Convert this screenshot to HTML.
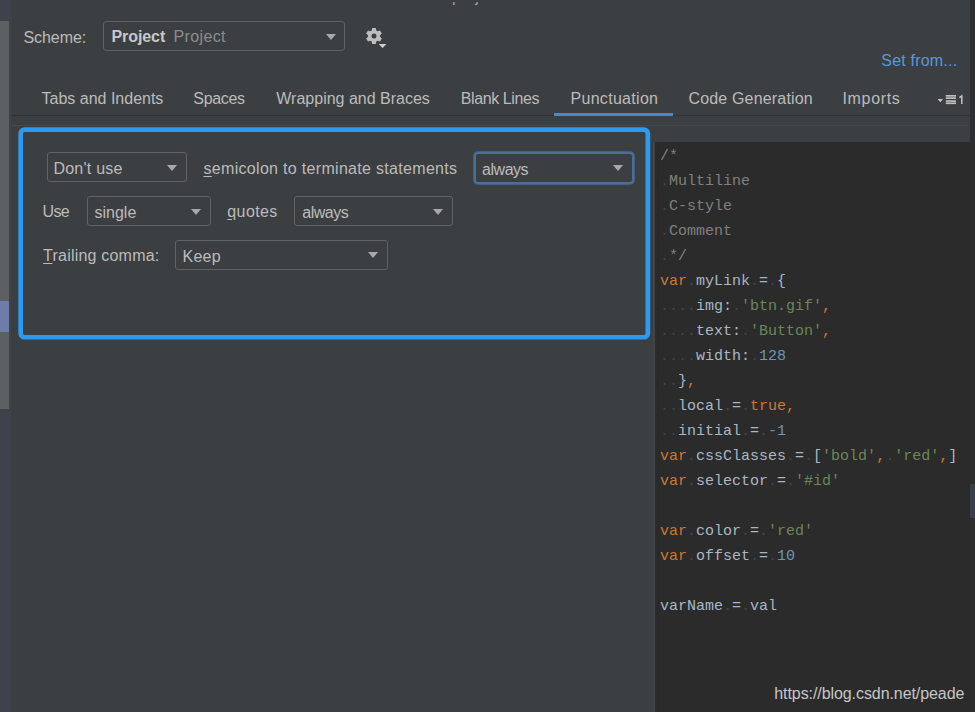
<!DOCTYPE html>
<html><head><meta charset="utf-8">
<style>
html,body{margin:0;padding:0;}
body{width:975px;height:712px;overflow:hidden;position:relative;background:#3C3F41;font-family:"Liberation Sans",sans-serif;}
.a{position:absolute;}
.t{position:absolute;font-size:16px;line-height:16px;white-space:pre;color:#BBBBBB;}
.cb{position:absolute;box-sizing:border-box;border:1px solid #616365;border-radius:3px;background:#3C3F41;}
.arr{position:absolute;width:0;height:0;border-left:5.5px solid transparent;border-right:5.5px solid transparent;border-top:6px solid #A8A8A8;}
.u{text-decoration:underline;text-underline-offset:2px;}
.code{position:absolute;left:660px;top:0;font-family:"Liberation Mono",monospace;font-size:15px;line-height:25px;white-space:pre;color:#A9B7C6;}
.k{color:#CC7832}.s{color:#6A8759}.n{color:#6897BB}.c{color:#808080}.w{color:#444444}
</style></head>
<body>
<!-- left tree strip -->
<div class="a" style="left:0;top:0;width:11px;height:712px;background:#3E424A;"></div>
<div class="a" style="left:0;top:21px;width:9px;height:388px;background:#5D6063;"></div>
<div class="a" style="left:0;top:301px;width:9px;height:31px;background:#6B7DA8;"></div>

<!-- top cut-off title -->
<div class="t" style="left:452px;top:-11px;color:#A0A0A0;clip-path:inset(13px 0 0 0);">project</div>

<!-- scheme row -->
<div class="t" style="left:23.5px;top:30px;letter-spacing:-0.08px;">Scheme:</div>
<div class="cb" style="left:103px;top:21px;width:242px;height:30px;"></div>
<div class="t" style="left:111.5px;top:29px;font-weight:bold;letter-spacing:-0.08px;color:#C8C8C8;">Project</div>
<div class="t" style="left:173.5px;top:29px;letter-spacing:0.37px;color:#8C8C8C;">Project</div>
<div class="arr" style="left:325.5px;top:33.5px;"></div>
<svg class="a" style="left:360.8px;top:22.9px;" width="28" height="28" viewBox="0 0 28 28"><path fill="#BDBDBD" fill-rule="evenodd" d="M15.25,7.44 L14.84,5.01 L11.16,5.01 L10.75,7.44 L9.31,8.27 L7.00,7.41 L5.16,10.60 L7.06,12.16 L7.06,13.84 L5.16,15.40 L7.00,18.59 L9.31,17.73 L10.75,18.56 L11.16,20.99 L14.84,20.99 L15.25,18.56 L16.69,17.73 L19.00,18.59 L20.84,15.40 L18.94,13.84 L18.94,12.16 L20.84,10.60 L19.00,7.41 L16.69,8.27 Z M13,10.5 A2.5,2.5 0 1 0 13,15.5 A2.5,2.5 0 1 0 13,10.5 Z"/><path d="M17.2,20.5 L25.9,20.5 L21.55,25.6 Z" fill="#3C3F41" stroke="#3C3F41" stroke-width="2" stroke-linejoin="round"/><path d="M17.7,20.9 L25.4,20.9 L21.55,25.0 Z" fill="#D0D0D0"/></svg>

<div class="t" style="left:881.3px;top:53px;letter-spacing:0.2px;color:#5A96DF;">Set from...</div>

<!-- tabs -->
<div class="t" style="left:41.5px;top:91px;">Tabs and Indents</div>
<div class="t" style="left:193.3px;top:91px;letter-spacing:-0.34px;">Spaces</div>
<div class="t" style="left:276.3px;top:91px;">Wrapping and Braces</div>
<div class="t" style="left:460.8px;top:91px;letter-spacing:-0.4px;">Blank Lines</div>
<div class="t" style="left:570.5px;top:91px;letter-spacing:0.3px;">Punctuation</div>
<div class="t" style="left:688.4px;top:91px;letter-spacing:0.18px;">Code Generation</div>
<div class="t" style="left:842.5px;top:91px;letter-spacing:0.67px;">Imports</div>
<svg class="a" style="left:930px;top:88px;" width="40" height="22" viewBox="0 0 40 22"><path d="M7.6,10.9 L13.1,10.9 L10.35,14.2 Z" fill="#C4C4C4"/><g fill="#BEBEBE"><rect x="15.8" y="7" width="10.2" height="1.7"/><rect x="15.8" y="9.3" width="10.2" height="1.7"/><rect x="15.8" y="12.2" width="10.2" height="1.7"/><rect x="15.8" y="14.4" width="10.2" height="1.7"/></g><path d="M29.4,9.6 L31.8,7.9 L31.8,16" stroke="#C4C4C4" stroke-width="1.5" fill="none"/></svg>
<div class="a" style="left:12px;top:115px;width:958px;height:1px;background:#303234;"></div>
<div class="a" style="left:554px;top:113px;width:119px;height:3px;background:#4A88C7;"></div>
<div class="a" style="left:12px;top:125px;width:956px;height:1px;background:#46494B;"></div>

<!-- right strip -->
<div class="a" style="left:970px;top:0;width:5px;height:142px;background:#2D2F30;"></div>

<!-- row 1 -->
<div class="cb" style="left:47px;top:152px;width:140px;height:30px;"></div>
<div class="t" style="left:53.4px;top:161px;letter-spacing:0.25px;">Don't use</div>
<div class="arr" style="left:167px;top:165px;"></div>
<div class="t" style="left:203.5px;top:161px;letter-spacing:0.31px;"><span class="u">s</span>emicolon to terminate statements</div>
<div class="cb" style="left:473.5px;top:151.5px;width:160.5px;height:32.5px;border:2.5px solid #4A6E95;box-shadow:0 0 0 1px #405F82;border-radius:4px;"></div>
<div class="t" style="left:482px;top:162px;letter-spacing:-0.46px;">always</div>
<div class="arr" style="left:613px;top:165px;"></div>

<!-- row 2 -->
<div class="t" style="left:42.6px;top:204px;letter-spacing:-0.65px;">Use</div>
<div class="cb" style="left:87px;top:196px;width:124px;height:30px;"></div>
<div class="t" style="left:94.5px;top:205px;">single</div>
<div class="arr" style="left:191px;top:209px;"></div>
<div class="t" style="left:227.3px;top:204px;letter-spacing:0.4px;"><span class="u">q</span>uotes</div>
<div class="cb" style="left:294px;top:196px;width:159px;height:30px;"></div>
<div class="t" style="left:302.2px;top:205px;letter-spacing:-0.46px;">always</div>
<div class="arr" style="left:433px;top:209px;"></div>

<!-- row 3 -->
<div class="t" style="left:43.1px;top:248px;letter-spacing:0.21px;"><span class="u">T</span>railing comma:</div>
<div class="cb" style="left:175px;top:240px;width:213px;height:30px;"></div>
<div class="t" style="left:182.4px;top:249px;letter-spacing:0.33px;">Keep</div>
<div class="arr" style="left:368px;top:252px;"></div>

<!-- annotation rectangle -->
<svg class="a" style="left:0;top:0;" width="975" height="712">
<rect x="20.65" y="129.55" width="627.2" height="207.7" rx="4" ry="4" fill="none" stroke="#2B9AF0" stroke-width="4.7"/>
</svg>

<!-- editor -->
<div class="a" style="left:653px;top:142px;width:2px;height:570px;background:#424447;"></div>
<div class="a" style="left:655px;top:142px;width:320px;height:570px;background:#2B2B2B;"></div>
<div class="a" style="left:657px;top:142px;width:2px;height:570px;background:#282929;"></div>
<div class="code" style="top:144px;"><span class="c">/*</span>
<span class="c"><span class="w">.</span>Multiline</span>
<span class="c"><span class="w">.</span>C-style</span>
<span class="c"><span class="w">.</span>Comment</span>
<span class="c"><span class="w">.</span>*/</span>
<span class="k">var</span><span class="w">.</span>myLink<span class="w">.</span>=<span class="w">.</span>{
<span class="w">....</span>img:<span class="w">.</span><span class="s">'btn.gif'</span><span class="k">,</span>
<span class="w">....</span>text:<span class="w">.</span><span class="s">'Button'</span><span class="k">,</span>
<span class="w">....</span>width:<span class="w">.</span><span class="n">128</span>
<span class="w">..</span>}<span class="k">,</span>
<span class="w">..</span>local<span class="w">.</span>=<span class="w">.</span><span class="k">true,</span>
<span class="w">..</span>initial<span class="w">.</span>=<span class="w">.</span><span class="n">-1</span>
<span class="k">var</span><span class="w">.</span>cssClasses<span class="w">.</span>=<span class="w">.</span>[<span class="s">'bold'</span><span class="k">,</span><span class="w">.</span><span class="s">'red'</span><span class="k">,</span>]
<span class="k">var</span><span class="w">.</span>selector<span class="w">.</span>=<span class="w">.</span><span class="s">'#id'</span>

<span class="k">var</span><span class="w">.</span>color<span class="w">.</span>=<span class="w">.</span><span class="s">'red'</span>
<span class="k">var</span><span class="w">.</span>offset<span class="w">.</span>=<span class="w">.</span><span class="n">10</span>

varName<span class="w">.</span>=<span class="w">.</span>val</div>

<div class="a" style="left:970px;top:142px;width:5px;height:570px;background:#2D2D2E;"></div>
<div class="a" style="left:970px;top:484px;width:5px;height:34px;background:#3A3F47;"></div>
<div class="a" style="left:774.3px;top:686px;font-size:16px;line-height:16px;white-space:pre;color:#C6C6C6;letter-spacing:-0.08px;">https://blog.csdn.net/peade</div>
</body></html>
